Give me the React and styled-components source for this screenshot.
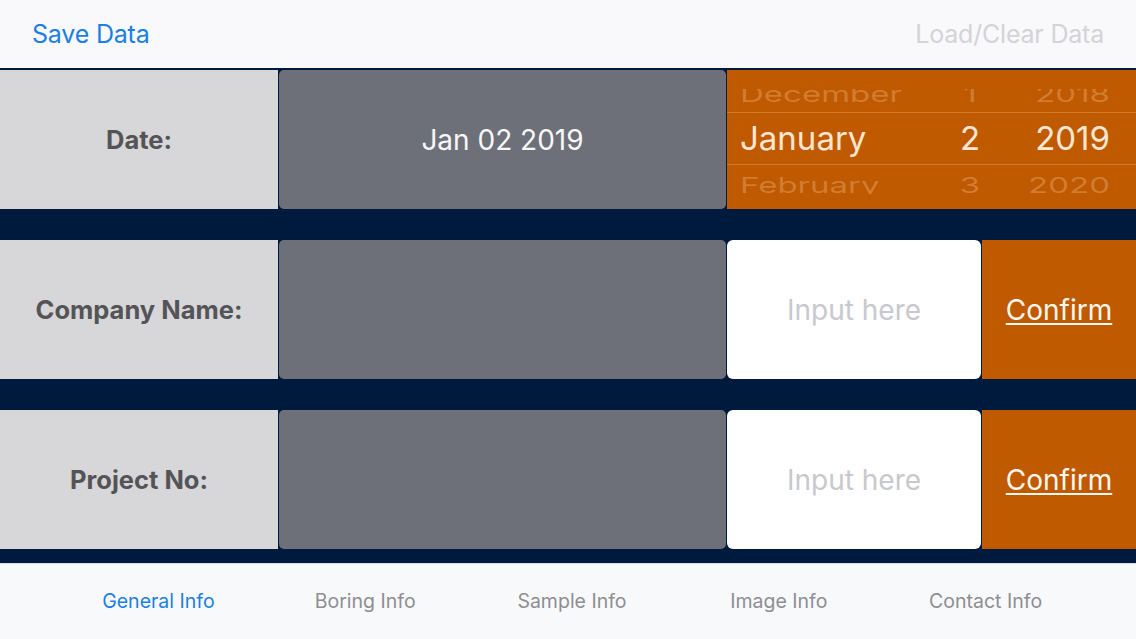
import styled, { createGlobalStyle } from 'styled-components'

const GlobalStyle = createGlobalStyle`
    html, body {
        margin: 0;
        padding: 0;
        background: #001a3e;
        font-family: Inter, "Noto Sans", "Liberation Sans", sans-serif;
    }
`

const fields = [
    { label: 'Company Name:' },
    { label: 'Project No:' },
]

const tabs = ['General Info', 'Boring Info', 'Sample Info', 'Image Info', 'Contact Info']

const App = () => {
    return (
        <Screen>
            <GlobalStyle />
            <TopBar>
                <TopAction>Save Data</TopAction>
                <TopAction disabled>Load/Clear Data</TopAction>
            </TopBar>

            <Rows>
                <Row>
                    <Label>Date:</Label>
                    <Value>Jan 02 2019</Value>
                    <Picker>
                        <PickerRow $pos="top">
                            <Month>December</Month>
                            <Day>1</Day>
                            <Year>2018</Year>
                        </PickerRow>
                        <PickerRow $pos="mid">
                            <Month>January</Month>
                            <Day>2</Day>
                            <Year>2019</Year>
                        </PickerRow>
                        <PickerRow $pos="bottom">
                            <Month>February</Month>
                            <Day>3</Day>
                            <Year>2020</Year>
                        </PickerRow>
                    </Picker>
                </Row>

                {fields.map(f => (
                    <Row key={f.label}>
                        <Label>{f.label}</Label>
                        <Value />
                        <Entry>
                            <Input placeholder="Input here" />
                            <Confirm>Confirm</Confirm>
                        </Entry>
                    </Row>
                ))}
            </Rows>

            <TabBar>
                {tabs.map((t, i) => (
                    <Tab key={t} $active={i === 0}>{t}</Tab>
                ))}
            </TabBar>
        </Screen>
    )
}

export default App

const Screen = styled.div`
    width: 1136px;
    height: 639px;
    display: flex;
    flex-direction: column;
    background: #001a3e;
    overflow: hidden;
`

const TopBar = styled.div`
    height: 68px;
    background: #f9f9fb;
    display: flex;
    align-items: center;
    justify-content: space-between;
    padding: 0 32px;
    box-sizing: border-box;
`

const TopAction = styled.span`
    font-size: 25px;
    color: ${p => p.disabled ? '#d3d3d8' : '#1b7fe3'};
    letter-spacing: -0.2px;
`

const Rows = styled.div`
    display: flex;
    flex-direction: column;
    gap: 31px;
    padding-top: 2px;
    flex: 1;
`

const Row = styled.div`
    height: 139px;
    display: grid;
    grid-template-columns: 278px 447px 409px;
    gap: 1px;
`

const Label = styled.div`
    background: #d7d6d9;
    display: flex;
    align-items: center;
    justify-content: center;
    font-size: 25.5px;
    font-weight: 700;
    color: #545457;
`

const Value = styled.div`
    background: #6e7079;
    border-radius: 5px;
    display: flex;
    align-items: center;
    justify-content: center;
    font-size: 28px;
    color: #f7f7f7;
`

const Picker = styled.div`
    background: #c05a00;
    display: flex;
    flex-direction: column;
    overflow: hidden;
`

const PickerRow = styled.div`
    display: grid;
    grid-template-columns: 1fr 60px 110px;
    padding: 0 26px 0 13px;
    font-size: 33px;
    line-height: 1;
    color: #fde6d2;
    ${p => p.$pos === 'mid' && `
        height: 51px;
        align-items: center;
        border-top: 1px solid #d27a2c;
        border-bottom: 1px solid #d27a2c;
    `}
    ${p => p.$pos === 'top' && `
        height: 42px;
        align-items: end;
        padding-bottom: 7px;
        box-sizing: border-box;
        color: rgba(255, 215, 180, 0.28);
        clip-path: inset(19px 0 0 0);
        > span { transform: scaleY(0.66); transform-origin: bottom; }
    `}
    ${p => p.$pos === 'bottom' && `
        height: 44px;
        align-items: start;
        padding-top: 10px;
        box-sizing: border-box;
        color: rgba(255, 215, 180, 0.28);
        clip-path: inset(0 0 15px 0);
        > span { transform: scaleY(0.66); transform-origin: top; }
    `}
`

const Month = styled.span`
    text-align: left;
`

const Day = styled.span`
    text-align: center;
`

const Year = styled.span`
    text-align: right;
`

const Entry = styled.div`
    display: grid;
    grid-template-columns: 254px 1fr;
    gap: 1px;
`

const Input = styled.input`
    border: none;
    outline: none;
    border-radius: 6px;
    background: #ffffff;
    text-align: center;
    font-family: inherit;
    font-size: 28px;
    color: #333;
    padding: 0;
    min-width: 0;

    &::placeholder {
        color: #c8c8ce;
    }
`

const Confirm = styled.div`
    background: #c05a00;
    display: flex;
    align-items: center;
    justify-content: center;
    font-size: 28px;
    color: #fff8f0;
    text-decoration: underline;
    text-underline-offset: 3px;
    text-decoration-thickness: 2px;
    cursor: pointer;
`

const TabBar = styled.div`
    height: 76px;
    background: #f8f9fa;
    border-top: 1px solid #d6dde6;
    box-sizing: border-box;
    display: grid;
    grid-template-columns: repeat(5, 1fr);
    padding: 0 47px 0 55px;
    align-items: center;
`

const Tab = styled.div`
    text-align: center;
    font-size: 19.5px;
    color: ${p => p.$active ? '#1b7fe3' : '#8e8e93'};
    padding-bottom: 2px;
`
